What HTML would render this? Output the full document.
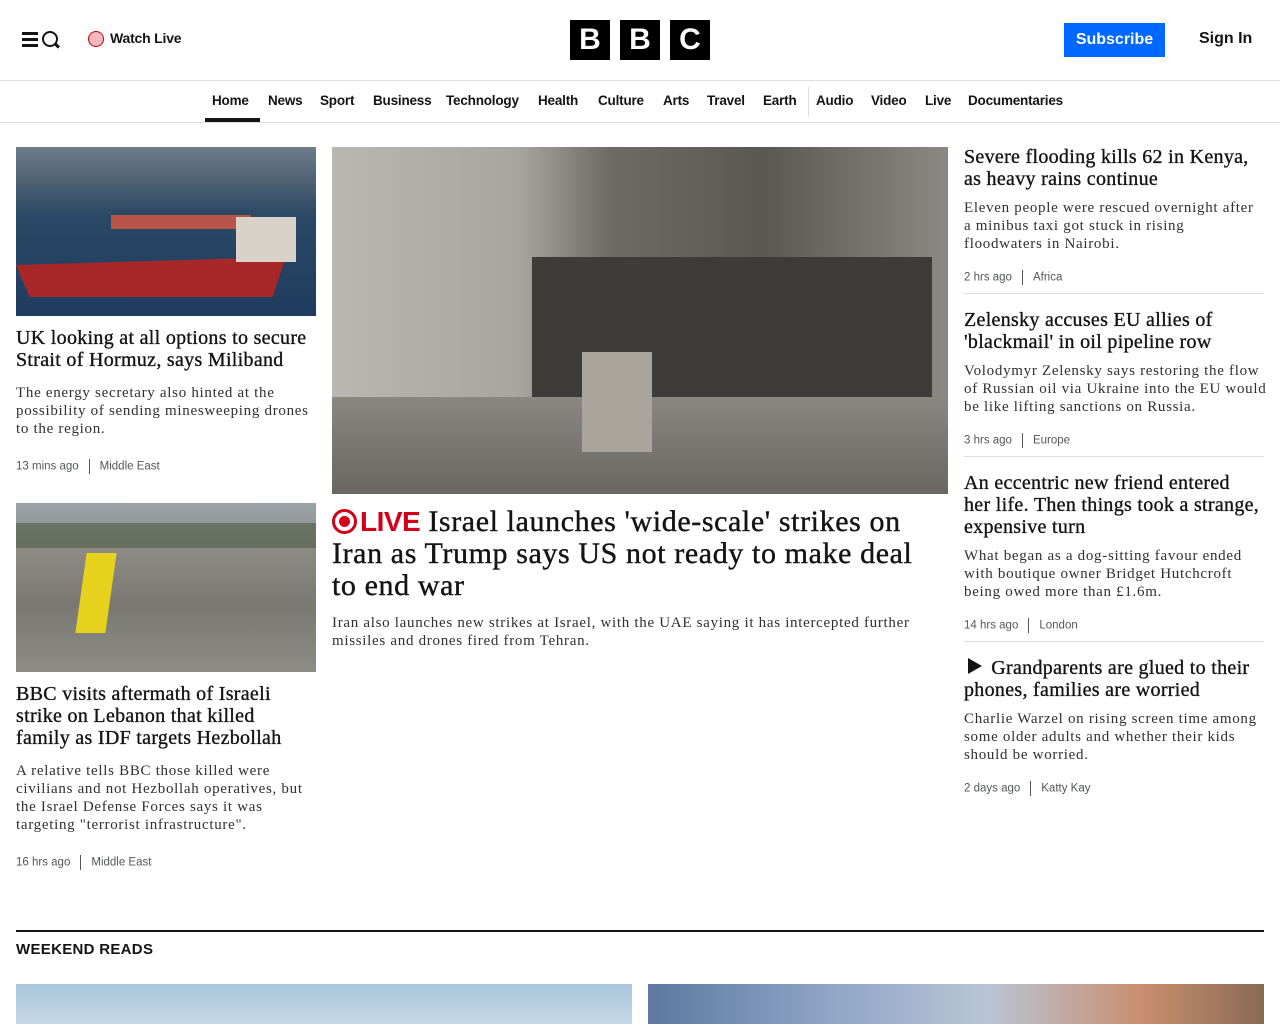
<!DOCTYPE html>
<html><head><meta charset="utf-8"><style>
*{margin:0;padding:0;box-sizing:border-box}
body{width:1280px;height:1024px;overflow:hidden;background:#fff;font-family:"Liberation Sans",sans-serif;color:#141414}
.hdr{position:absolute;left:0;top:0;width:1280px;height:81px;border-bottom:1px solid #ddd}
.nav{position:absolute;left:0;top:81px;width:1280px;height:42px;border-bottom:1px solid #ddd}
.nav span{position:absolute;top:12px;font-size:13.5px;font-weight:bold;color:#141414;letter-spacing:-.2px}
.abs{position:absolute}
.h{font-family:"Liberation Serif",serif;font-size:20px;line-height:22px;-webkit-text-stroke:.35px #141414;color:#141414;letter-spacing:.3px;white-space:nowrap}
.d{font-family:"Liberation Serif",serif;font-size:15px;line-height:18px;color:#303030;letter-spacing:.7px;white-space:nowrap}
.m{font-size:11.5px;color:#545658}
.m i{display:inline-block;width:1px;height:15px;background:#545658;vertical-align:middle;margin:0 10px}
.sep{position:absolute;left:964px;width:300px;height:1px;background:#ddd}
</style></head><body>
<div class="hdr">
 <div class="abs" style="left:22px;top:32px;width:16px;height:2.5px;background:#141414"></div>
 <div class="abs" style="left:22px;top:38px;width:16px;height:2.5px;background:#141414"></div>
 <div class="abs" style="left:22px;top:44px;width:16px;height:2.5px;background:#141414"></div>
 <div class="abs" style="left:42px;top:31px;width:16px;height:16px;border:2.5px solid #141414;border-radius:50%"></div>
 <div class="abs" style="left:54px;top:44px;width:6px;height:2.5px;background:#141414;transform:rotate(45deg)"></div>
 <div class="abs" style="left:88px;top:31px;width:16px;height:16px;border:1.5px solid #c00;border-radius:50%;background:#f4b8bd"></div>
 <div class="abs" style="left:110px;top:30px;font-size:14px;font-weight:bold;letter-spacing:-.2px">Watch Live</div>
 <div class="abs" style="left:570px;top:20px;width:40px;height:40px;background:#000;color:#fff;font-weight:bold;font-size:30px;text-align:center;line-height:40px">B</div>
 <div class="abs" style="left:620px;top:20px;width:40px;height:40px;background:#000;color:#fff;font-weight:bold;font-size:30px;text-align:center;line-height:40px">B</div>
 <div class="abs" style="left:670px;top:20px;width:40px;height:40px;background:#000;color:#fff;font-weight:bold;font-size:30px;text-align:center;line-height:40px">C</div>
 <div class="abs" style="left:1064px;top:23px;width:101px;height:34px;background:#0068ff;color:#fff;font-weight:bold;font-size:16px;text-align:center;line-height:33px">Subscribe</div>
 <div class="abs" style="left:1199px;top:30px;font-size:16px;font-weight:bold">Sign In</div>
</div>
<div class="nav">
 <span style="left:212px">Home</span><span style="left:268px">News</span><span style="left:320px">Sport</span><span style="left:373px">Business</span><span style="left:446px">Technology</span><span style="left:538px">Health</span><span style="left:598px">Culture</span><span style="left:663px">Arts</span><span style="left:707px">Travel</span><span style="left:763px">Earth</span><span style="left:816px">Audio</span><span style="left:871px">Video</span><span style="left:925px">Live</span><span style="left:968px">Documentaries</span>
 <div class="abs" style="left:808px;top:6px;width:1px;height:30px;background:#ddd"></div>
 <div class="abs" style="left:205px;top:37px;width:55px;height:4px;background:#141414"></div>
</div>
<!-- left col -->
<div class="abs" style="left:16px;top:147px;width:300px;height:169px;background:linear-gradient(180deg,#6d7c8a 0%,#4c6072 22%,#2b4866 40%,#1f3c5e 100%)">
 <div class="abs" style="left:95px;top:68px;width:140px;height:14px;background:#b85548"></div>
 <div class="abs" style="left:0;top:110px;width:270px;height:40px;background:#a8282a;clip-path:polygon(0 20%,100% 0,95% 100%,5% 100%)"></div>
 <div class="abs" style="left:220px;top:70px;width:60px;height:45px;background:#d8d2c8"></div>
</div>
<div class="abs h" style="left:16px;top:327px">UK looking at all options to secure<br>Strait of Hormuz, says Miliband</div>
<div class="abs d" style="left:16px;top:384px">The energy secretary also hinted at the<br>possibility of sending minesweeping drones<br>to the region.</div>
<div class="abs m" style="left:16px;top:459px">13 mins ago<i></i>Middle East</div>
<div class="abs" style="left:16px;top:503px;width:300px;height:169px;background:linear-gradient(180deg,#9aa3a8 0%,#8a8a82 30%,#7a7872 60%,#8d8b86 100%)">
 <div class="abs" style="left:65px;top:50px;width:30px;height:80px;background:#e6d21c;transform:skewX(-8deg)"></div>
 <div class="abs" style="left:0;top:20px;width:300px;height:25px;background:#4d5a45;opacity:.6"></div>
</div>
<div class="abs h" style="left:16px;top:683px">BBC visits aftermath of Israeli<br>strike on Lebanon that killed<br>family as IDF targets Hezbollah</div>
<div class="abs d" style="left:16px;top:762px">A relative tells BBC those killed were<br>civilians and not Hezbollah operatives, but<br>the Israel Defense Forces says it was<br>targeting "terrorist infrastructure".</div>
<div class="abs m" style="left:16px;top:855px">16 hrs ago<i></i>Middle East</div>
<!-- middle -->
<div class="abs" style="left:332px;top:147px;width:616px;height:347px;background:linear-gradient(90deg,#b9b7b2 0%,#a8a6a0 30%,#6e6b66 45%,#5a5853 70%,#8c8984 100%)">
 <div class="abs" style="left:200px;top:110px;width:400px;height:150px;background:#3e3c39"></div>
 <div class="abs" style="left:0;top:250px;width:616px;height:97px;background:linear-gradient(180deg,#8a8781,#6a6762)"></div>
 <div class="abs" style="left:250px;top:205px;width:70px;height:100px;background:#a9a59d"></div>
</div>
<div class="abs" style="left:332px;top:506px;white-space:nowrap;font-family:'Liberation Serif',serif;font-size:30px;line-height:32px;color:#141414;-webkit-text-stroke:.4px #141414;letter-spacing:.6px"><span style="display:inline-block;width:25px;height:25px;border:3px solid #d4001a;border-radius:50%;vertical-align:-3px;position:relative;margin-right:3px"><span style="position:absolute;left:4px;top:4px;width:11px;height:11px;border-radius:50%;background:#d4001a"></span></span><span style="font-family:'Liberation Sans',sans-serif;color:#d4001a;font-weight:bold;-webkit-text-stroke:0;font-size:28px;letter-spacing:-.5px">LIVE</span> Israel launches 'wide-scale' strikes on<br>Iran as Trump says US not ready to make deal<br>to end war</div>
<div class="abs d" style="left:332px;top:614px">Iran also launches new strikes at Israel, with the UAE saying it has intercepted further<br>missiles and drones fired from Tehran.</div>
<!-- right -->
<div class="abs h" style="left:964px;top:146px">Severe flooding kills 62 in Kenya,<br>as heavy rains continue</div>
<div class="abs d" style="left:964px;top:199px">Eleven people were rescued overnight after<br>a minibus taxi got stuck in rising<br>floodwaters in Nairobi.</div>
<div class="abs m" style="left:964px;top:270px">2 hrs ago<i></i>Africa</div>
<div class="sep" style="top:293px"></div>
<div class="abs h" style="left:964px;top:309px">Zelensky accuses EU allies of<br>'blackmail' in oil pipeline row</div>
<div class="abs d" style="left:964px;top:362px">Volodymyr Zelensky says restoring the flow<br>of Russian oil via Ukraine into the EU would<br>be like lifting sanctions on Russia.</div>
<div class="abs m" style="left:964px;top:433px">3 hrs ago<i></i>Europe</div>
<div class="sep" style="top:456px"></div>
<div class="abs h" style="left:964px;top:472px">An eccentric new friend entered<br>her life. Then things took a strange,<br>expensive turn</div>
<div class="abs d" style="left:964px;top:547px">What began as a dog-sitting favour ended<br>with boutique owner Bridget Hutchcroft<br>being owed more than £1.6m.</div>
<div class="abs m" style="left:964px;top:618px">14 hrs ago<i></i>London</div>
<div class="sep" style="top:641px"></div>
<div class="abs h" style="left:964px;top:657px"><svg width="22" height="18" viewBox="0 0 22 18" style="vertical-align:-1px"><path d="M4 1 L18 9 L4 17Z" fill="#141414"/></svg> Grandparents are glued to their<br>phones, families are worried</div>
<div class="abs d" style="left:964px;top:710px">Charlie Warzel on rising screen time among<br>some older adults and whether their kids<br>should be worried.</div>
<div class="abs m" style="left:964px;top:781px">2 days ago<i></i>Katty Kay</div>
<!-- weekend reads -->
<div class="abs" style="left:16px;top:930px;width:1248px;height:2px;background:#141414"></div>
<div class="abs" style="left:16px;top:941px;font-size:15px;font-weight:bold;letter-spacing:.3px">WEEKEND READS</div>
<div class="abs" style="left:16px;top:984px;width:616px;height:40px;background:linear-gradient(180deg,#a9c6dc,#c4d8e6)"></div>
<div class="abs" style="left:648px;top:984px;width:616px;height:40px;background:linear-gradient(90deg,#5e78a0 0%,#8fa6c6 30%,#b9c5d6 55%,#c98f6e 80%,#8a6a55 100%)"></div>
</body></html>
